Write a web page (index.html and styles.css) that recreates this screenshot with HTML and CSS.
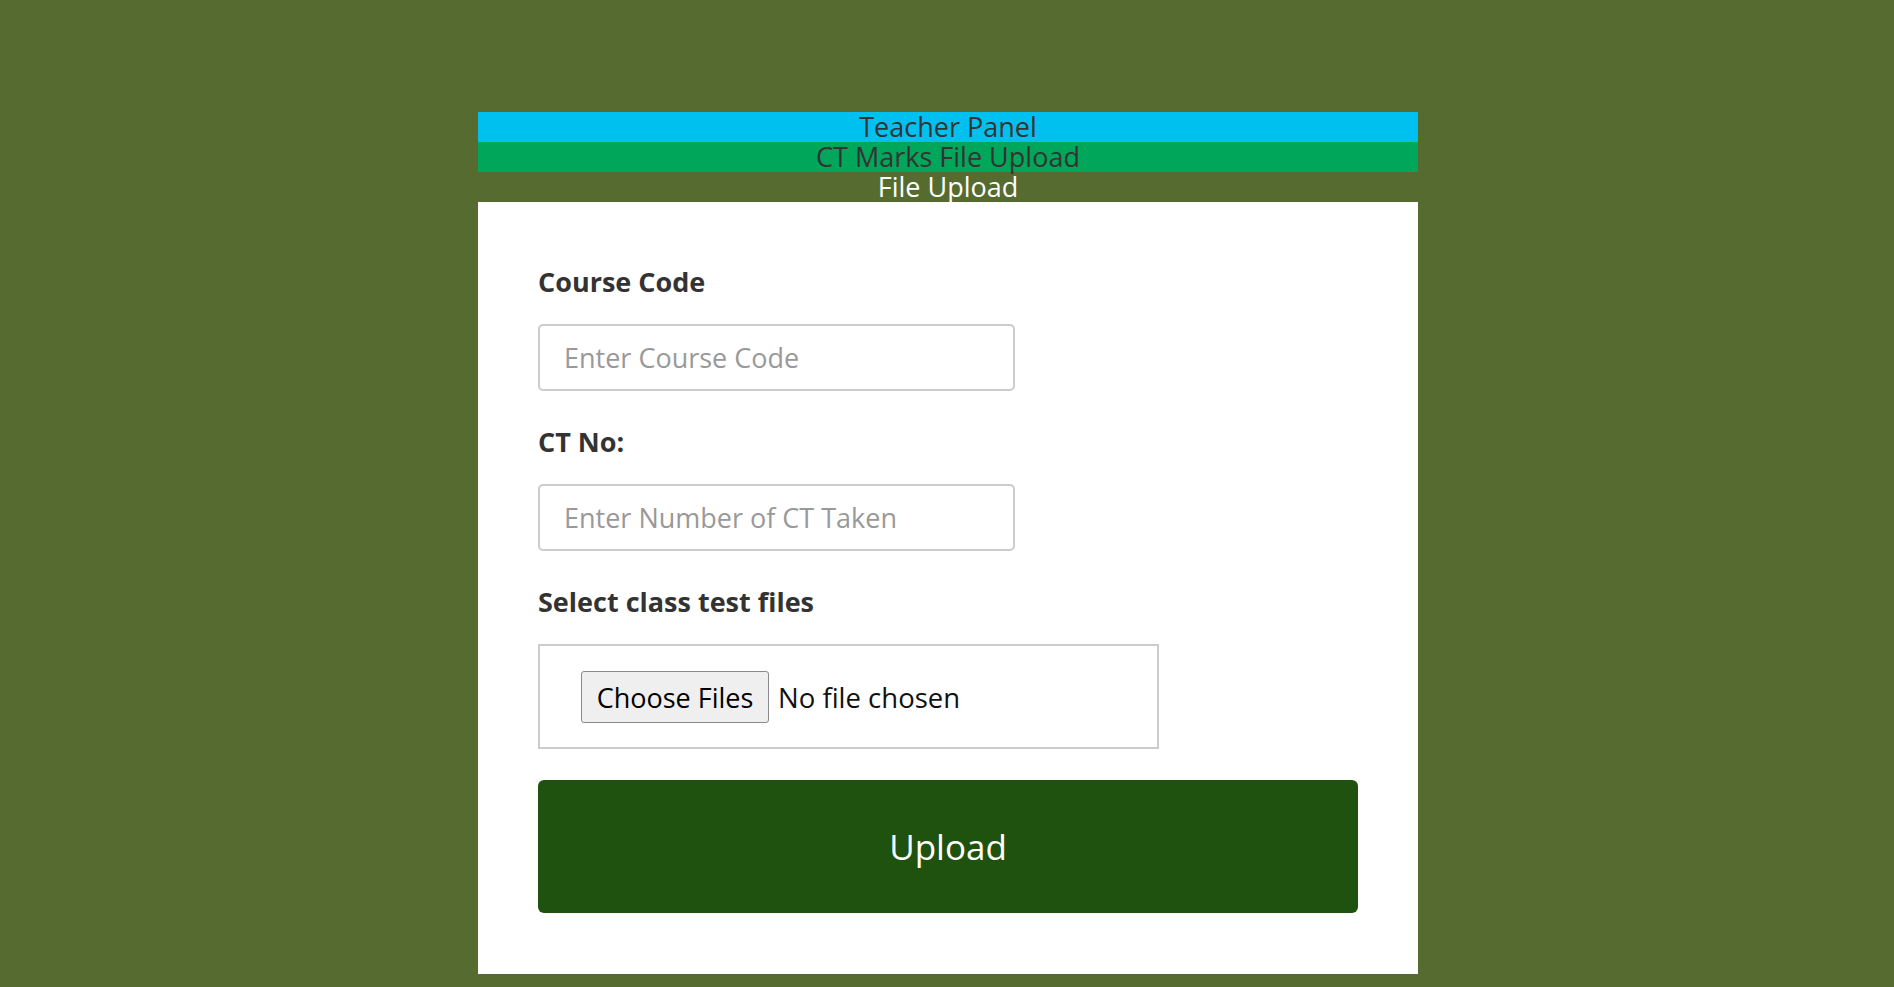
FILE: index.html
```html
<!DOCTYPE html>
<html lang="en">
<head>
<meta charset="utf-8">
<title>CT Marks File Upload</title>
<link rel="stylesheet" href="styles.css">
</head>
<body>
<div class="panel">
  <div class="bar bar-aqua">Teacher Panel</div>
  <div class="bar bar-green">CT Marks File Upload</div>
  <div class="bar bar-plain">File Upload</div>
  <form class="card">
    <div class="group">
      <label class="label" for="code">Course Code</label>
      <input class="field" id="code" type="text" placeholder="Enter Course Code">
    </div>
    <div class="group">
      <label class="label" for="ct">CT No:</label>
      <input class="field" id="ct" type="text" placeholder="Enter Number of CT Taken">
    </div>
    <div class="group group-last">
      <label class="label" for="files">Select class test files</label>
      <div class="filebox">
        <input class="file" id="files" type="file" multiple>
      </div>
    </div>
    <button class="upload" type="button">Upload</button>
  </form>
</div>
</body>
</html>
```

FILE: styles.css
```css
html, body {
  margin: 0;
  padding: 0;
}

body {
  background: #556b2f;
  font-family: "Open Sans", "Noto Sans", sans-serif;
  color: #333;
  min-height: 987px;
  padding-left: 2px;
}

.panel {
  width: 940px;
  margin: 112px auto 0;
}

.bar {
  height: 30px;
  line-height: 30px;
  font-size: 27px;
  text-align: center;
  color: #333;
  white-space: nowrap;
}

.bar-aqua { background: #00c0ef; }
.bar-green { background: #00a65a; }
.bar-plain { color: #fff; }

.card {
  background: #fff;
  padding: 62px 60px 61px;
  margin: 0;
}

.group {
  margin-bottom: 33px;
}

.group-last {
  margin-bottom: 31px;
}

.label {
  display: block;
  font-size: 27px;
  font-weight: 700;
  line-height: 36px;
  color: #333;
  margin-bottom: 24px;
}

.field {
  box-sizing: border-box;
  display: block;
  width: 477px;
  height: 67px;
  border: 2px solid #cccccc;
  border-radius: 5px;
  padding: 0 24px;
  font-family: inherit;
  font-size: 27px;
  color: #555;
  outline: none;
}

.field::placeholder {
  color: #999;
}

.filebox {
  box-sizing: border-box;
  width: 621px;
  height: 105px;
  border: 2px solid #cccccc;
  padding: 25px 0 0 41px;
}

.file {
  font-family: inherit;
  font-size: 27.5px;
  color: #111;
  line-height: 52px;
}

.file::file-selector-button {
  font-family: inherit;
  font-size: 27px;
  color: #000;
  background: #efefef;
  border: 1px solid #8a8a8a;
  border-radius: 3px;
  height: 52px;
  width: 188px;
  padding: 0;
  margin-right: 9px;
}

.upload {
  display: block;
  width: 820px;
  height: 133px;
  border: 0;
  border-radius: 6px;
  background: #1e520e;
  color: #fff;
  font-family: inherit;
  font-size: 35px;
  cursor: pointer;
}
```
